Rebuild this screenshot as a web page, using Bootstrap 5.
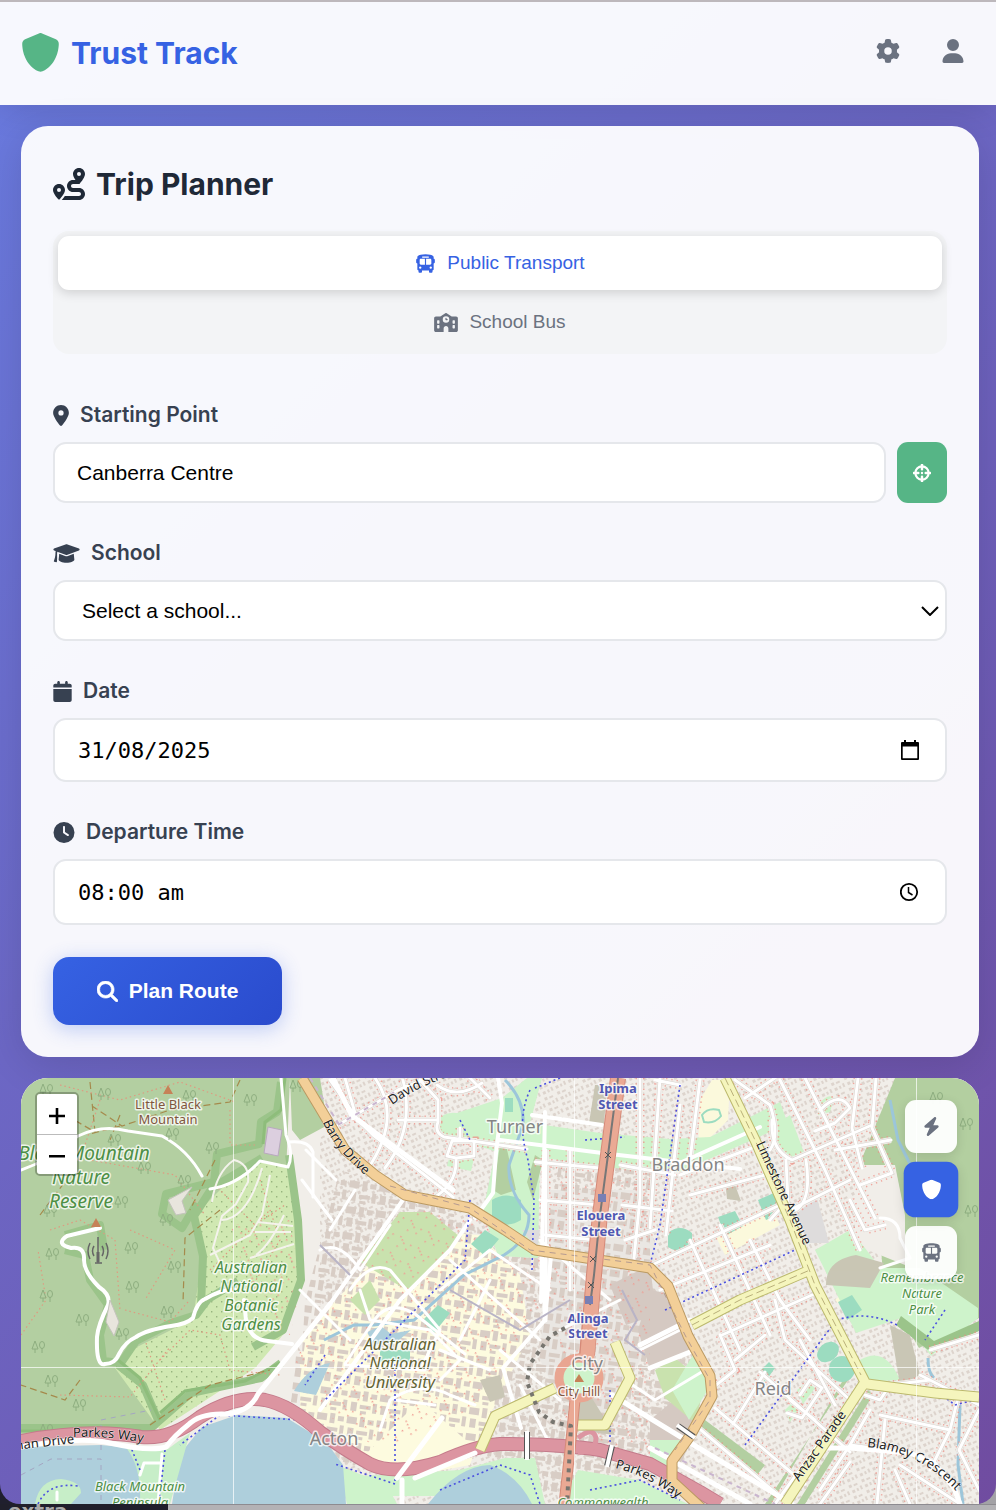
<!DOCTYPE html>
<html lang="en-AU">
<head>
<meta charset="utf-8">
<meta name="viewport" content="width=device-width, initial-scale=1">
<title>Trust Track</title>
<link href="https://cdn.jsdelivr.net/npm/bootstrap@5.3.0/dist/css/bootstrap.min.css" rel="stylesheet">
<style>
:root{--blue:#3662e3;--green:#56b586;--ink:#1f2937;--label:#374151;--muted:#6b7280;--line:#e5e7eb}
body{font-family:Inter,"Noto Sans",sans-serif;background:linear-gradient(90deg,#201f2e 0 50%,#a3a2a6 50%);color:var(--ink)}
.app-shell{background:linear-gradient(135deg,#697be0,#704ca0);border-radius:0 0 20px 20px}
.app-header{background:rgba(255,255,255,.95);border-top:2px solid #bdb8bc;padding:18px 21px 20px;height:105px;box-shadow:0 4px 32px rgba(0,0,0,.12)}
.brand-link{font-size:30px;line-height:40px;font-weight:700;color:var(--blue);gap:11px}
.brand-link svg{width:39px;height:39px;color:var(--green)}
.tool-btn{width:45px;height:45px;border:0;color:var(--muted);background:none}
.tool-btn svg{width:24px;height:24px}
svg{fill:currentColor;display:block;flex:none}
.app-main{padding:21px 17px 0 21px}
.planner{background:rgba(255,255,255,.95);border-radius:27px;padding:32px;box-shadow:0 8px 40px rgba(0,0,0,.12)}
.planner h1{font-size:30px;line-height:52px;font-weight:700;gap:11px;margin-bottom:21px}
.planner h1 svg{width:32px;height:32px}
.mode-switch{background:#f3f4f6;border-radius:16px;padding:5px;gap:5px;margin-bottom:47px}
.mode-btn{height:54px;border:0;border-radius:11px;background:none;color:var(--muted);font:19px "Liberation Sans",Arial,sans-serif;gap:11px;padding:0}
.mode-btn svg{height:19px}
.mode-btn.on{background:#fff;color:var(--blue);box-shadow:0 3px 11px rgba(0,0,0,.15)}
.field{margin-bottom:36px}
.field-last{margin-bottom:32px}
.field label{display:flex;align-items:center;gap:11px;font-size:21px;line-height:28px;font-weight:600;color:var(--label);margin-bottom:13px}
.field label svg{height:21px}
.field .form-control,.field .form-select{height:61px;border:2px solid var(--line);border-radius:13px;padding:0 22px;font:21px "Liberation Sans",Arial,sans-serif;color:#000;background-color:#fff}
.field .form-select{padding-left:27px;background-image:url("data:image/svg+xml,%3Csvg xmlns='http://www.w3.org/2000/svg' viewBox='0 0 18 10'%3E%3Cpath d='M1 1l8 8 8-8' fill='none' stroke='%23000' stroke-width='2'/%3E%3C/svg%3E");background-size:18px 10px;background-position:right 6px center}
.field .mono-input{font-family:"DejaVu Sans Mono",monospace;font-size:22px;height:64px;padding:0 23px}
.field .time-input{height:66px}
.pick-btn{position:absolute;right:22px;top:0;bottom:0;border:0;background:none;padding:0 5px;color:#000}
.pick-btn svg{width:20px;height:20px}
.locate-btn{width:50px;height:61px;border:0;border-radius:11px;background:var(--green);color:#fff}
.plan-btn{height:68px;width:229px;border:0;border-radius:16px;background:linear-gradient(135deg,#3662e3,#2a4bcd);color:#fff;font:bold 21px "Liberation Sans",Arial,sans-serif;gap:11px;box-shadow:0 4px 20px rgba(54,98,227,.3)}
.plan-btn svg{width:21px;height:21px;stroke:#fff;stroke-width:16px}
.map-panel{margin-top:21px;height:426px;border-radius:27px 27px 0 0;overflow:hidden;background:#f1eee9}
.map-art{width:100%;height:100%}
.zoom-box{left:14px;top:14px;border:2px solid rgba(0,0,0,.25);border-radius:5px;background-clip:padding-box}
.zoom-box button{width:40px;height:40px;border:0;background:#fff;padding:3px 0 0}
.zoom-box button+button{border-top:1px solid #bbb}
.layer-box{right:22px;top:22px;gap:10px}
.layer-box button{width:52px;height:53px;border:0;border-radius:11px;background:rgba(255,255,255,.95);color:var(--muted);box-shadow:0 3px 11px rgba(0,0,0,.12)}
.layer-box button.on{background:var(--blue);color:#fff;transform:scale(1.05)}
.layer-box svg{height:19px}
.under-strip{height:6px;overflow:hidden;background:linear-gradient(#8d8b90 0 1px,#b3b2b5 1px)}
.under-dark{width:168px;height:6px;background:#201f2b;color:#aaa;font:bold 20px/14px "DejaVu Sans",sans-serif;padding-left:8px}
/* map */
.w{fill:none;stroke:#fff;stroke-linecap:round;stroke-linejoin:round;stroke-width:3}
.casing{fill:none;stroke:#d9d3cf;stroke-width:4}
.paths{fill:none;stroke:#ee8f85;stroke-width:9;stroke-dasharray:1.3 4;opacity:.75}
.mask{fill:none;stroke:#f1eee9;stroke-width:6}
.avenue{stroke-width:5}
.foot{fill:none;stroke:#df9a80;stroke-width:1.2;stroke-dasharray:1.5 3}
.track{fill:none;stroke:#a58a4c;stroke-width:1.2;stroke-dasharray:7 4}
.bike{fill:none;stroke:#4a50e0;stroke-width:1.6;stroke-dasharray:2 3}
.ln{fill:none;stroke-linejoin:round}
.tx{font-family:"Noto Sans","Open Sans",sans-serif;text-anchor:middle;paint-order:stroke;stroke:#fff;stroke-opacity:.75;stroke-width:3px;stroke-linejoin:round}
.park{fill:#4d8f45;font-style:italic}
.sub{fill:#858585;font-size:18px}
.stop{fill:#5058b2;font-weight:700;font-size:13px}
.uni{fill:#626333;font-style:italic;font-size:16px}
.rd{fill:#222;font-size:13px;stroke-width:1px}
</style>
</head>
<body>
<svg width="0" height="0" class="position-absolute" aria-hidden="true">
<symbol id="i-shield" viewBox="0 0 512 512"><path d="M269.4 2.9C265.2 1 260.7 0 256 0s-9.2 1-13.4 2.9L54.3 82.8c-22 9.3-38.4 31-38.3 57.2c.5 99.2 41.3 280.7 213.6 363.2c16.7 8 36.1 8 52.8 0C454.7 420.7 495.5 239.2 496 140c.1-26.2-16.3-47.9-38.3-57.2L269.4 2.9z"/></symbol>
<symbol id="i-bus" viewBox="0 0 576 512"><path d="M288 0C422.4 0 512 35.2 512 80V96l0 32c17.7 0 32 14.3 32 32v64c0 17.7-14.3 32-32 32l0 160c0 17.7-14.3 32-32 32v32c0 17.7-14.3 32-32 32H416c-17.7 0-32-14.3-32-32V448H192v32c0 17.7-14.3 32-32 32H128c-17.7 0-32-14.3-32-32l0-32c-17.7 0-32-14.3-32-32l0-160c-17.7 0-32-14.3-32-32V160c0-17.7 14.3-32 32-32h0V96h0V80C64 35.2 153.6 0 288 0zM128 160v96c0 17.7 14.3 32 32 32H272V128H160c-17.7 0-32 14.3-32 32zM304 288H416c17.7 0 32-14.3 32-32V160c0-17.7-14.3-32-32-32H304V288zM144 400a32 32 0 1 0 0-64 32 32 0 1 0 0 64zm288 0a32 32 0 1 0 0-64 32 32 0 1 0 0 64zM384 80c0-8.8-7.2-16-16-16H208c-8.8 0-16 7.2-16 16s7.2 16 16 16H368c8.8 0 16-7.2 16-16z"/></symbol>
</svg>

<div class="app-shell">
<header class="app-header d-flex align-items-center justify-content-between">
  <a href="#" class="brand-link d-flex align-items-center text-decoration-none"><svg><use href="#i-shield"/></svg><span>Trust Track</span></a>
  <nav class="d-flex pb-1" style="gap:20px" aria-label="Account">
    <button class="tool-btn d-flex align-items-center justify-content-center p-0" aria-label="Settings"><svg viewBox="0 0 512 512"><path d="M495.9 166.6c3.2 8.7 .5 18.4-6.4 24.6l-43.3 39.4c1.1 8.3 1.7 16.8 1.7 25.4s-.6 17.1-1.7 25.4l43.3 39.4c6.9 6.2 9.6 15.9 6.4 24.6c-4.4 11.9-9.7 23.3-15.8 34.3l-4.7 8.1c-6.6 11-14 21.4-22.1 31.2c-5.9 7.2-15.7 9.6-24.5 6.8l-55.7-17.7c-13.4 10.3-28.2 18.9-44 25.4l-12.5 57.1c-2 9.1-9 16.3-18.2 17.8c-13.8 2.3-28 3.5-42.5 3.5s-28.7-1.2-42.5-3.5c-9.2-1.5-16.2-8.7-18.2-17.8l-12.5-57.1c-15.8-6.5-30.6-15.1-44-25.4L83.1 425.9c-8.8 2.8-18.6 .3-24.5-6.8c-8.1-9.8-15.5-20.2-22.1-31.2l-4.7-8.1c-6.1-11-11.4-22.4-15.8-34.3c-3.2-8.7-.5-18.4 6.4-24.6l43.3-39.4C64.6 273.1 64 264.6 64 256s.6-17.1 1.7-25.4L22.4 191.2c-6.9-6.2-9.6-15.9-6.4-24.6c4.4-11.9 9.7-23.3 15.8-34.3l4.7-8.1c6.6-11 14-21.4 22.1-31.2c5.9-7.2 15.7-9.6 24.5-6.8l55.7 17.7c13.4-10.3 28.2-18.9 44-25.4l12.5-57.1c2-9.1 9-16.3 18.2-17.8C227.3 1.2 241.5 0 256 0s28.7 1.2 42.5 3.5c9.2 1.5 16.2 8.7 18.2 17.8l12.5 57.1c15.8 6.5 30.6 15.1 44 25.4l55.7-17.7c8.8-2.8 18.6-.3 24.5 6.8c8.1 9.8 15.5 20.2 22.1 31.2l4.7 8.1c6.1 11 11.4 22.4 15.8 34.3zM256 336a80 80 0 1 0 0-160 80 80 0 1 0 0 160z"/></svg></button>
    <button class="tool-btn d-flex align-items-center justify-content-center p-0" aria-label="Profile"><svg viewBox="0 0 448 512"><path d="M224 256A128 128 0 1 0 224 0a128 128 0 1 0 0 256zm-45.7 48C79.8 304 0 383.8 0 482.3C0 498.7 13.3 512 29.7 512H418.3c16.4 0 29.7-13.3 29.7-29.7C448 383.8 368.2 304 269.7 304H178.3z"/></svg></button>
  </nav>
</header>

<main class="app-main">
<form class="planner" onsubmit="return false">
  <h1 class="d-flex align-items-center"><svg viewBox="0 0 512 512"><path d="M512 96c0 50.2-59.1 125.1-84.6 155c-3.8 4.4-9.4 6.1-14.5 5H320c-17.7 0-32 14.3-32 32s14.3 32 32 32h96c53 0 96 43 96 96s-43 96-96 96H139.6c8.7-9.9 19.3-22.6 30-36.8c6.3-8.4 12.8-17.6 19-27.2H416c17.7 0 32-14.3 32-32s-14.3-32-32-32H320c-53 0-96-43-96-96s43-96 96-96h39.8c-21-31.5-39.8-67.7-39.8-96c0-53 43-96 96-96s96 43 96 96zM117.1 489.1c-3.8 4.3-7.2 8.1-10.1 11.3l-1.8 2-.2-.2c-6 4.6-14.6 4-20-1.8C59.8 473 0 402.5 0 352c0-53 43-96 96-96s96 43 96 96c0 30-21.1 67-43.5 97.9c-10.7 14.7-21.7 28-30.8 38.5l-.6 .7zM128 352a32 32 0 1 0 -64 0 32 32 0 1 0 64 0zM416 128a32 32 0 1 0 0-64 32 32 0 1 0 0 64z"/></svg>Trip Planner</h1>
  <div class="mode-switch d-flex flex-column">
    <button type="button" class="mode-btn on d-flex align-items-center justify-content-center"><svg width="21"><use href="#i-bus"/></svg>Public Transport</button>
    <button type="button" class="mode-btn d-flex align-items-center justify-content-center"><svg viewBox="0 0 640 512" width="24"><path d="M337.8 5.4C327-1.8 313-1.8 302.2 5.4L166.3 96H48C21.5 96 0 117.5 0 144V464c0 26.5 21.5 48 48 48H256V416c0-35.3 28.7-64 64-64s64 28.7 64 64v96H592c26.5 0 48-21.5 48-48V144c0-26.5-21.5-48-48-48H473.7L337.8 5.4zM96 192h32c8.8 0 16 7.2 16 16v64c0 8.8-7.2 16-16 16H96c-8.8 0-16-7.2-16-16V208c0-8.8 7.2-16 16-16zm400 16c0-8.8 7.2-16 16-16h32c8.8 0 16 7.2 16 16v64c0 8.8-7.2 16-16 16H512c-8.8 0-16-7.2-16-16V208zM96 320h32c8.8 0 16 7.2 16 16v64c0 8.8-7.2 16-16 16H96c-8.8 0-16-7.2-16-16V336c0-8.8 7.2-16 16-16zm400 16c0-8.8 7.2-16 16-16h32c8.8 0 16 7.2 16 16v64c0 8.8-7.2 16-16 16H512c-8.8 0-16-7.2-16-16V336zM232 176a88 88 0 1 1 176 0 88 88 0 1 1 -176 0zm88-48c-8.8 0-16 7.2-16 16v32c0 8.8 7.2 16 16 16h32c8.8 0 16-7.2 16-16s-7.2-16-16-16H336V144c0-8.8-7.2-16-16-16z"/></svg>School Bus</button>
  </div>
  <div class="field">
    <label for="start"><svg viewBox="0 0 384 512" width="16"><path d="M215.7 499.2C267 435 384 279.4 384 192C384 86 298 0 192 0S0 86 0 192c0 87.4 117 243 168.3 307.2c12.3 15.3 35.1 15.3 47.4 0zM192 128a64 64 0 1 1 0 128 64 64 0 1 1 0-128z"/></svg>Starting Point</label>
    <div class="d-flex" style="gap:11px">
      <input id="start" class="form-control flex-fill" type="text" value="Canberra Centre">
      <button type="button" class="locate-btn d-flex align-items-center justify-content-center flex-shrink-0 p-0" aria-label="Use my location"><svg width="18" height="18" viewBox="0 0 18 18"><circle cx="9" cy="9" r="6.6" fill="none" stroke="currentColor" stroke-width="2.2"/><path d="M9 .8v4.500M9 12.700v4.500M.8 9h4.500M12.700 9h4.500" stroke="currentColor" stroke-width="2.500" stroke-linecap="round"/><circle cx="9" cy="9" r="1.200"/></svg></button>
    </div>
  </div>
  <div class="field">
    <label for="school"><svg viewBox="0 0 640 512" width="27"><path d="M320 32c-8 0-16 1.400-24 4L16 137c-10 4-16 13-16 23s6 19 16 23l40 14c-4 20-6 40-6 64 0 60-18 120-38 176-3 8 0 16 8 18l50 12c9 2 16-3 17-11 8-60 5-120 3-180 0-22 2-42 6-62l200 72c16 6 32 6 48 0l280-103c10-4 16-13 16-23s-6-19-16-23L344 36c-8-3-16-4-24-4zM143 263l-15 145c0 35 86 72 192 72s192-37 192-72l-15-145-142 51c-23 8-47 8-70 0z"/></svg>School</label>
    <select id="school" class="form-select"><option>Select a school...</option></select>
  </div>
  <div class="field">
    <label for="day"><svg viewBox="0 0 448 512" width="19"><path d="M96 32V64H48C21.5 64 0 85.5 0 112v48H448V112c0-26.5-21.5-48-48-48H352V32c0-17.7-14.3-32-32-32s-32 14.3-32 32V64H160V32c0-17.7-14.3-32-32-32S96 14.3 96 32zM448 192H0V464c0 26.5 21.5 48 48 48H400c26.5 0 48-21.5 48-48V192z"/></svg>Date</label>
    <div class="position-relative">
      <input id="day" class="form-control mono-input" type="text" inputmode="numeric" value="31/08/2025">
      <button type="button" class="pick-btn" aria-label="Open calendar"><svg viewBox="0 0 20 20"><path d="M2 2h2V0h2v2h8V0h2v2h2a1 1 0 0 1 1 1v16a1 1 0 0 1-1 1H2a1 1 0 0 1-1-1V3a1 1 0 0 1 1-1zm.700 4.500v11.800h14.600V6.500z" fill-rule="evenodd"/></svg></button>
    </div>
  </div>
  <div class="field field-last">
    <label for="depart"><svg viewBox="0 0 512 512" width="22"><path d="M256 0a256 256 0 1 1 0 512A256 256 0 1 1 256 0zM232 120V256c0 8 4 15.5 10.7 20l96 64c11 7.4 25.9 4.4 33.3-6.7s4.4-25.9-6.7-33.3L280 243.2V120c0-13.3-10.7-24-24-24s-24 10.7-24 24z"/></svg>Departure Time</label>
    <div class="position-relative">
      <input id="depart" class="form-control mono-input time-input" type="text" value="08:00 am">
      <button type="button" class="pick-btn" aria-label="Open time picker"><svg viewBox="0 0 20 20"><g fill="none" stroke="currentColor"><circle cx="9" cy="10" r="8.200" stroke-width="1.800"/><path d="M8.500 5v5.500l4 2.500" stroke-width="1.500"/></g></svg></button>
    </div>
  </div>
  <button class="plan-btn d-flex align-items-center justify-content-center"><svg viewBox="0 0 512 512"><path d="M416 208c0 45.9-14.9 88.3-40 122.7L502.6 457.4c12.5 12.5 12.5 32.8 0 45.3s-32.8 12.5-45.3 0L330.7 376c-34.4 25.2-76.8 40-122.7 40C93.1 416 0 322.9 0 208S93.1 0 208 0S416 93.1 416 208zM208 352a144 144 0 1 0 0-288 144 144 0 1 0 0 288z"/></svg>Plan Route</button>
</form>

<section class="map-panel position-relative" aria-label="Map">
<svg class="map-art" viewBox="21 1078 958 426" preserveAspectRatio="xMidYMid slice">
<defs>
<pattern id="houses" width="14" height="12" patternUnits="userSpaceOnUse" patternTransform="rotate(-25)"><path fill="#ddd4cd" d="M1 1h3v3H1zM6 2h4v2H6zM11 6h2v4h-2zM2 7h3v3H2zM7 7h2v3H7z"/></pattern>
<pattern id="blocks" width="30" height="26" patternUnits="userSpaceOnUse" patternTransform="rotate(8)"><path fill="#d8cdc5" d="M1 2h10v7H1zM14 1h5v10h-5zM22 3h6v5h-6zM3 13h6v9H3zM12 15h11v4H12zM25 12h4v10h-4zM13 21h6v3h-6z"/></pattern>
<pattern id="reds" width="21" height="19" patternUnits="userSpaceOnUse" patternTransform="rotate(33)"><path fill="#ef9d93" d="M1 1h1.500v1.500H1zM4 3h1.500v1.500H4zM7 5h1.500v1.500H7zM12 9h1.500v1.500H12zM3 11h1.500v1.500H3zM14 3h1.500v1.500H14z"/></pattern>
<pattern id="dots" width="10" height="10" patternUnits="userSpaceOnUse"><path fill="#98b57f" d="M1 1h1.400v1.400H1zM6 6h1.400v1.400H6z"/></pattern>
<g id="trees" fill="none" stroke="#8eae80" stroke-width="1"><path d="M0 8L3 0l3 8zM3 8v4M10 7v5"/><ellipse cx="10" cy="4" rx="2.500" ry="3.500"/></g>
<path id="p-barry" d="M323 1122Q334 1150 371 1180"/><path id="p-lime" d="M756 1144Q774 1184 806 1250"/><path id="p-anz" d="M799 1482L850 1410"/><path id="p-bla" d="M867 1447Q920 1452 955 1490"/><path id="p-park" d="M615 1468Q648 1476 680 1500"/><path id="p-pw" d="M73 1437Q110 1436 146 1443"/><path id="p-man" d="M16 1450L76 1443"/><path id="p-dav" d="M392 1105Q420 1085 462 1072"/>
<g id="minor">
<path d="M330 1080l28 40 15 15 80 62M345 1078l12 42M338 1125l60-35 30-12M375 1078q28 40-8 92M420 1080l18 20v22q-4 10 6 15l83 12M437 1085q20 15 45-2M398 1120h38M470 1078l20 20M403 1080q12 50-18 88M430 1200q28-15 26-42l18-2v-15h-22l-5 15 9 2M460 1140v-12"/>
<path d="M546 1150v140M570 1150v140M535 1162l65 6M540 1200l60 5M545 1235l50 5M640 1078v120l-6 60M660 1078l-10 150M680 1105l-14 130M655 1080l25 5M700 1080l-10 80M620 1165l55 10M622 1205l50 6"/>
<path d="M652 1265l128-60M660 1290l110-45M690 1240l50 110M720 1225l50 110M750 1240l30 60 30 40M680 1175l80-30M690 1195l75-20M735 1080l35 25q10 30 0 45M625 1240l30-10"/>
<path d="M780 1080l45 90 35 80M805 1078l40 80 30 60M858 1078l-6 50 10 40M772 1120q-2 30 20 40l80-35M745 1098l30-20M820 1110q20-20 30-2l-15 15-20 8M786 1160l2 40-18 20M806 1160q6 40-10 50M835 1150l56-10M790 1210l60-30M876 1078l-4 50 20 45-32 12M850 1200l15 30 20-5"/>
<path d="M722 1335l90-40M720 1335l15 35-25 20M735 1360l30-25M775 1300l10 40 65 60M760 1372l90 80M715 1408l90 76M695 1425l90 76M850 1400l-75 104M765 1372l-32 52M790 1400l25 20M800 1395l10-15 12 8-20 30-15-5M800 1340l35 65"/>
<path d="M870 1410l-20 35M865 1395l15 5 10-15 40-5M880 1415l70 15 10-40M885 1420l-8 84M820 1490l30-45 60 8M850 1462l-30 42M895 1470l15 34M900 1465l60 39M950 1430l-20 40M979 1410l-20 40 20 40M920 1375l59 30M930 1350l49-15"/>
</g>
</defs>
<rect x="21" y="1078" width="958" height="426" fill="#f1eee9"/>
<rect x="320" y="1078" width="659" height="426" fill="url(#houses)"/>
<!-- campus and commercial blocks -->
<path fill="#fdfbdf" d="M300 1340L400 1230l80 5 40 40 10 60-50 100-10 30-80 15-90-70z"/>
<path fill="#fbf9dc" d="M700 1100l12-20h18l-2 40-30 30zM715 1235l55-30 10 20-55 30zM835 1300l40-36 15 45-30 18z"/>
<path fill="#eae7e3" d="M550 1190h90l30 110-60 120-50-20-20-40z"/>
<path fill="url(#blocks)" d="M300 1320L340 1170l90 30 50 30 60 30 20-100h90v120l50 90-30 80-110 50-60-30-80-70-70 70-60-60z"/>
<path fill="#d5c9c2" d="M650 1290l25 5 20 50-25 20-20 5-12-40zM610 1285l40-20 6 50-30 10zM650 1420l30-25 25 15-25 55-30-15z"/>
<path fill="url(#reds)" d="M420 1210L350 1290l-60 60 30 60 60 40 90-40 70-100 100-60-40-60-100 30zM560 1180h90v280l-90-30z"/>
<path fill="#c9e2ae" d="M400 1212l-40 50 50 30 50-55-30-25zM350 1300l20-20 10 20-15 15zM655 1370l20-12 30 25-10 40-30-25z"/><path fill="url(#reds)" d="M400 1212l-40 50 50 30 50-55-30-25z"/>
<!-- forest -->
<path fill="#b3cfa1" d="M21 1078h299l8 50-36 12-4 60 14 62-30 76-130 102H21z"/>
<path fill="#f1eee9" d="M290 1078h10l28 52-14 14-12 210-10-20-6-160z"/>
<path fill="#b3cfa1" d="M290 1078h20l16 48-26 14-8-10zM895 1078h84v240l-60 30-35-60-6-80-20-40z"/>
<path fill="#f1eee9" d="M855 1165l40 0 10 50 0 50-50-20z"/>
<path fill="#d0e8b2" d="M260 1161l29 4 10 60 1 60-13 45-32 38-95 62-45-62 8-14 70-35 10-69-8-35 30-30z"/>
<path fill="url(#dots)" d="M260 1161l29 4 10 60 1 60-13 45-32 38-95 62-45-62 8-14 70-35 10-69-8-35 30-30z"/>
<path fill="url(#reds)" d="M230 1225l60-5 10 60-50 10zM262 1280l38 10-10 45-20-10z"/>
<g fill="none" stroke="#9bc48a" stroke-width="8" stroke-linejoin="round"><path d="M289 1155l9 65 3 60-18 50-30 17M262 1158l-50 30-18 28 9 40-2 50M281 1082l-4 30-16 10-2 22-42 10-3 28-48 12-4 20 20 14 15-25M65 1235l35-10 4 25M65 1250l20 5 5 25 18 25-8 30 3 26 18 2 15-22 35-18 25-8 12-16 30-18M118 1365l25 20 15 35M21 1428h130l40-35 70-15 20-15"/></g>
<g fill="none" stroke="#8ebd7b" stroke-width="3"><path d="M285 1078l-4 32-16 12-2 22M118 1360l22 18 20 42M21 1431h120M160 1413l25-22 60-10 35-18"/></g>
<g class="track"><path d="M90 1082l5 50-38-22M240 1080l-10 22-60 8-48 16-30-20M120 1115l-10 25M120 1126l-30 8M40 1215l30-40M220 1210l-35 28-2 65M80 1380l-15 20-44-15M215 1160l-25 50M150 1425l60-40 60-15"/></g>
<g class="foot"><path d="M50 1120l40 40 85 15 30 40M60 1085l60 15 60-18 55 20M230 1110v35h25M50 1230l30-10 35 20 5 70M21 1335l25-35-8-50M130 1230l45 20-30 50M125 1310l45 12 18-20M100 1100l-20 60-50 5M160 1360l30-30 30 5 10 35 50 5M165 1400l-20-60M60 1395l70 2 40-50M215 1185l40 40 30-20M210 1270l60-60M260 1180l20 60-30 50"/></g>
<g fill="none" stroke="#f4f3ec" stroke-width="2" stroke-linejoin="round"><path d="M212 1202q4-30 22-42 16 4 14 22l-12 22-14 12-9 32 10 22M262 1168q-14 50-40 52M270 1175l-8 40-12 20-40 20M255 1232h36M258 1222l35 4M250 1258l44-14M284 1215q-14 30-28 40"/></g>
<path class="w" d="M21 1170q30-10 57-34 24-12 50-5l34 5q26 14 40 40M210 1189q28-4 50-28l28 6q6-12-2-32l-5-57M289 1142q20-2 24 10v45"/>
<path class="w" style="stroke-width:4" d="M100 1228l-33 8q-12 8 4 12 14-2 13 12 0 12 15 27 12 8 9 18-10 20-11 32-1 30 8 27 10 0 14-10 6-12 17-17 10-7 35-11 16-2 22-8 4-16 12-19 16-10 30-9M244 1300l2 20q4 20 22 21l24 3"/>
<path fill="#e8e5dd" stroke="#c4c4bc" d="M168 1200l24-13-10 14 4 12-10 2zM110 1300l9 22-5 14-8-14z"/>
<path fill="#dccfdf" stroke="#b9a9bf" d="M268 1127l14 3-4 26-14-3z"/>
<g><use href="#trees" x="40" y="1084"/><use href="#trees" x="98" y="1088"/><use href="#trees" x="183" y="1090"/><use href="#trees" x="244" y="1094"/><use href="#trees" x="290" y="1080"/><use href="#trees" x="108" y="1134"/><use href="#trees" x="166" y="1128"/><use href="#trees" x="206" y="1142"/><use href="#trees" x="138" y="1162"/><use href="#trees" x="178" y="1175"/><use href="#trees" x="44" y="1205"/><use href="#trees" x="115" y="1196"/><use href="#trees" x="160" y="1214"/><use href="#trees" x="46" y="1248"/><use href="#trees" x="125" y="1242"/><use href="#trees" x="168" y="1261"/><use href="#trees" x="126" y="1281"/><use href="#trees" x="40" y="1290"/><use href="#trees" x="76" y="1314"/><use href="#trees" x="161" y="1306"/><use href="#trees" x="32" y="1341"/><use href="#trees" x="45" y="1375"/><use href="#trees" x="73" y="1399"/><use href="#trees" x="40" y="1424"/><use href="#trees" x="116" y="1328"/><use href="#trees" x="960" y="1118"/><use href="#trees" x="965" y="1205"/><use href="#trees" x="930" y="1092"/></g>
<!-- parks -->
<g fill="#cef3cb"><path d="M437 1123q5-12 20-10l45-15 25-20h15l-12 45 70 10 70 6 40-2 70-35 8 22-108 48-50-2-100-14-30-3-60-20zM498 1140l42 10-2 108-40-2-15-45zM450 1155l24 3-3 13-24-5zM772 1128l18-13 16 43q-30 5-34-30zM820 1103q8-10 14-5l-4 14-12 3z"/><path d="M815 1250l35-20 15 18 15 20h40l58 40v10l-47 38-30-38-45 15zM860 1360q25-15 40 20l-38 2zM672 1390l25-42 12 40-20 32zM578 1470l60 10 50 24H560zM460 1470l45-12 30 0 10 46h-18q-30-70-90-8h-86l10-20zM337 1465l50 20 10 19h-50zM650 1440h30l-10 30-20-5zM797 1390l10-8 8 6-12 16zM785 1410l8-8 6 6-9 14z"/></g>
<path fill="#9bc48a" d="M896 1325l36 28 47-22v-10l-45 20-33-25z"/>
<path fill="#b3cfa1" d="M500 1145h6l10 45-15 5-8-5zM535 1155l8 5-10 40-6-18zM858 1365l-12 10-75 129h-6zM868 1390l5 5-68 109h-8zM705 1420l60 45-8 10-58-43z"/>
<path fill="#c9c6b5" d="M826 1285q0-25 30-30l28 8-14 25zM890 1325l20 10 10 40-20 10zM480 1380l20-5 5 22-15 5zM595 1085h12l-3 40-15-2zM575 1395h15l25 40-40-5zM725 1180l10 5 6 16-14-2z"/>
<g fill="#9cdcc0"><path d="M492 1200q14-9 29 0v20q-14 9-29 0zM485 1230l14 9-14 17-14-12zM668 1233q12-10 24 0v14q-12 8-24 0zM758 1200l18-8 8 20-18 8zM718 1217l17-6 8 15-18 10zM759 1372l10-10 6 6-10 14zM838 1302l14-7 10 15-15 10zM438 1305l12 8-16 20-12-12zM505 1098h8v14h-8zM380 1350h30v12h-30z"/><circle cx="842" cy="1369" r="13"/><ellipse cx="828" cy="1352" rx="12" ry="9" transform="rotate(-40 828 1352)"/></g>
<path fill="none" stroke="#9cdcc0" stroke-width="2" d="M702 1115q6-8 17-5l2 6q-6 8-17 6z"/>
<path fill="#dedcdc" d="M795 1214l22-16 12 45-20 0zM540 1230h-18l15 20z"/>
<!-- water -->
<path fill="#aecfdc" d="M21 1447l80-2 50 5-5 54H21zM172 1504l8-50 22-27 35-12 50 3 40 25 16 22 3 39zM428 1504q30-38 62-39 28 10 42 39z"/>
<path fill="#c7eec8" d="M123 1444l45 5 8-6 14-10-20 71h-30q2-40-17-60zM35 1504q4-24 26-25 20 2 20 14l-10 11z"/>
<path class="w" d="M158 1504l4-50M140 1475l4-12 16 0M57 1500v-8"/>
<path fill="none" stroke="#9dc6da" stroke-width="3" d="M505 1080q20 20 18 45l-14 40q-2 25 20 50 0 25-25 40l-40 20-50 45-40 5-20 0-30 15M890 1100l8 40 20 40M960 1405l-2 60 5 39M928 1358q0 15 6 20"/>
<path fill="#aecfdc" d="M294 1391q15-25 36-28l-14 32zM367 1332l14-6 10 8 20-4-12 10-25 5z"/>
<path fill="none" stroke="#a4a6c2" stroke-dasharray="5 5" d="M21 1475l30-16h50v45M101 1450v-30l50-10"/>
<!-- residential streets with dotted footpaths either side -->
<use href="#minor" class="paths"/><use href="#minor" class="mask"/><use href="#minor" class="casing"/><use href="#minor" class="w"/>
<g class="w">
<path d="M320 1250q20-10 40 20l30-45M330 1230l25-40M300 1290l50 50M345 1364l30-45q15-20 40-5l50 40M350 1290q20-30 40-20l50 60-20 40M360 1290l10 30 60 10 30 30-20 20M440 1350l50 20M380 1430l10-30q30-20 60-5l25 10M440 1290l50-40 60 40M450 1260l90 80M395 1400l40 5M520 1385l30 60M345 1365l80 5M490 1280l-30 60M500 1350l60 50M560 1330l60-30M625 1380l30 20 50-30M610 1300l-70-60M640 1350l40-20M302 1180l30 40M306 1150l30 30M880 1218q20 0 20 20l10 20-30 10"/>
<path style="stroke-width:4" d="M498 1078l4 25-6 50-3 40-18 25M500 1140l110 14 130 15M675 1165l85-38M532 1115l70 10M545 1112l-4 190M330 1304l75-107M470 1220l-20 30-50 50-80 110M551 1256l-6 64-42 48 18 60"/>
<path class="avenue" d="M353 1118l-20-40M358 1120l95 70M612 1395l90 55 90 54M650 1448l100 56M650 1368l45-18M640 1345l50-25M825 1448l25 0 60 5 24 10 20 25 6 16M545 1320v-60"/></g>
<path fill="none" stroke="#b9b4c6" stroke-width="2" d="M320 1245l30 30M450 1290l70 40 50-30M622 1290l15 30-12 20 20 15"/>
<path fill="none" stroke="#c9b5cf" stroke-width="2" stroke-dasharray="5 5" d="M338 1125l60-35M655 1448l120 56M310 1078l30 48"/>
<g class="bike"><path d="M530 1090q-14 30-2 70l6 40-2 70M680 1085l-20 140-10 40M460 1120l10 20M585 1140l40-3M470 1200l-5 60-50 50-90 90M395 1364v120l-60-20M300 1420l-80-5-40 30M165 1450l-6 54M140 1470l-10-25M440 1490l60-25 30 10 10 29M590 1490l50-10 40 20M610 1390v60M745 1445l80-110 12-15q30-10 60 5M665 1310l130-60M945 1310l-20 30M935 1390l20 15 24-6M560 1078l-25 10M325 1355l-20 30M38 1504q10-22 40-18"/></g>
<!-- motorway -->
<g class="ln"><path stroke="#c47b8b" stroke-width="14" d="M21 1441Q90 1428 141 1437Q170 1440 200 1417Q235 1395 265 1400Q290 1405 320 1432Q345 1450 370 1464Q395 1476 440 1462Q475 1446 500 1444Q560 1444 600 1450L650 1464L700 1492L720 1504"/><path stroke="#dc95a1" stroke-width="12" d="M21 1441Q90 1428 141 1437Q170 1440 200 1417Q235 1395 265 1400Q290 1405 320 1432Q345 1450 370 1464Q395 1476 440 1462Q475 1446 500 1444Q560 1444 600 1450L650 1464L700 1492L720 1504"/><path stroke="#dc95a1" stroke-width="5" d="M578 1438q15-12 18 0 0 14-18 14"/></g>
<path class="w" style="stroke-width:5" d="M21 1447Q80 1436 110 1443Q150 1452 166 1447Q175 1435 188 1425Q200 1413 225 1414Q250 1412 258 1394L330 1304M397 1478l45-60M415 1478l60-25M402 1480v24"/>
<!-- arterials -->
<g class="ln" stroke="#bb9a63" stroke-width="11"><path d="M302 1078l18 30 25 42 30 25 30 20 65 13 35 22 30 20 115 18 18 18 20 50 22 40 2 20-22 40-18 25 0 20 38 35"/></g>
<g class="ln" stroke="#f3cf98" stroke-width="9"><path d="M302 1078l18 30 25 42 30 25 30 20 65 13 35 22 30 20 115 18 18 18 20 50 22 40 2 20-22 40-18 25 0 20 38 35"/></g>
<path class="ln" stroke="#b49a90" stroke-dasharray="6 5" d="M390 1186l80 22 60 42 120 15 35 70 25 45 0 20-35 50"/>
<g class="ln"><path stroke="#bcb96d" stroke-width="11" d="M725 1078l30 62 35 80 25 65 50 97-80 122M860 1383l75 10 44 4M692 1325l48-25 70-30M615 1342l15 36-25 47h-28M555 1388l-60 28-15 34"/><path stroke="#f5f5bd" stroke-width="9" d="M725 1078l30 62 35 80 25 65 50 97-80 122M860 1383l75 10 44 4M692 1325l48-25 70-30M615 1342l15 36-25 47h-28M555 1388l-60 28-15 34"/><path stroke="#b9b07a" stroke-dasharray="8 4" d="M725 1078l30 62 35 80 25 65 46 90M692 1325l48-25 70-30"/></g>
<g class="ln"><path stroke="#d58a79" stroke-width="16" d="M618 1078l-10 77-8 60-6 60-7 80"/><path stroke="#d58a79" stroke-width="11" d="M575 1400l-5 50-6 54"/><circle cx="579" cy="1378" r="20" stroke="#e9a591" stroke-width="9" fill="#cef3cb"/><path stroke="#eaa994" stroke-width="14" d="M618 1078l-10 77-8 60-6 60-7 85"/><path stroke="#eaa994" stroke-width="9" d="M575 1400l-5 50-6 54"/><path stroke="#777" stroke-width="2" d="M618 1078l-10 77-8 60-6 60-4 30"/><path stroke="#77756f" stroke-width="4" stroke-dasharray="4 5" d="M565 1328l-15 8-20 28-3 18 12 30 14 10 18 4-4 78"/></g>
<path stroke="#555" fill="none" d="M605 1152l6 6m0-6l-6 6M590 1256l6 6m0-6l-6 6M588 1282l6 6m0-6l-6 6"/>
<path fill="#787fb4" d="M598 1194h8v8h-8zM585 1296h8v8h-8z"/>
<path class="ln" stroke="#555" stroke-width="6" d="M527 1432v27M607 1466l5-20M678 1426l16 11"/><path class="ln" stroke="#fff" stroke-width="4" d="M527 1431v29M607 1467l5-22M677 1425l18 13"/>
<path fill="#c68258" d="M168 1085l5 9h-10zM96 1218l5 9h-10zM579 1374l5 8h-10z"/>
<g fill="none" stroke="#666" stroke-width="1.500"><path d="M98 1237v26M95 1263h7M94 1246q-3 5 0 10M90 1243q-4 8 0 16M102 1246q3 5 0 10M106 1243q4 8 0 16"/><path stroke-width="3" d="M98 1252v10"/></g>
<!-- names -->
<g class="tx">
<g fill="#80563e" font-size="13"><text x="168" y="1109">Little Black</text><text x="168" y="1124">Mountain</text><text x="579" y="1396" font-size="12">City Hill</text></g>
<g class="park" font-size="19"><text x="84" y="1160">Black Mountain</text><text x="81" y="1184">Nature</text><text x="81" y="1208">Reserve</text></g>
<g class="park" font-size="16"><text x="251" y="1273">Australian</text><text x="251" y="1292">National</text><text x="251" y="1311">Botanic</text><text x="251" y="1330">Gardens</text></g>
<g class="park" font-size="13"><text x="140" y="1491">Black Mountain</text><text x="140" y="1507">Peninsula</text><text x="922" y="1282">Remembrance</text><text x="922" y="1298">Nature</text><text x="922" y="1314">Park</text><text x="603" y="1507">Commonwealth</text></g>
<g class="uni"><text x="400" y="1350">Australian</text><text x="400" y="1369">National</text><text x="400" y="1388">University</text></g>
<g class="sub"><text x="515" y="1133">Turner</text><text x="688" y="1171">Braddon</text><text x="773" y="1395">Reid</text><text x="334" y="1445">Acton</text><text x="587" y="1370">City</text></g>
<g class="stop"><text x="618" y="1093">Ipima</text><text x="618" y="1109">Street</text><text x="601" y="1220">Elouera</text><text x="601" y="1236">Street</text><text x="588" y="1323">Alinga</text><text x="588" y="1338">Street</text></g>
</g>
<g class="tx rd" style="text-anchor:start"><text><textPath href="#p-barry">Barry Drive</textPath></text><text><textPath href="#p-lime">Limestone Avenue</textPath></text><text><textPath href="#p-anz">Anzac Parade</textPath></text><text><textPath href="#p-bla">Blamey Crescent</textPath></text><text><textPath href="#p-park">Parkes Way</textPath></text><text><textPath href="#p-pw">Parkes Way</textPath></text><text><textPath href="#p-man">nan Drive</textPath></text><text><textPath href="#p-dav">David Street</textPath></text></g>
<path stroke="#fff" stroke-opacity=".7" d="M233.500 1078v426M574.500 1078v426M916.500 1078v426M21 1367.500h958"/>
</svg>
<div class="zoom-box position-absolute overflow-hidden d-flex flex-column">
<button type="button" class="d-flex align-items-center justify-content-center" aria-label="Zoom in"><svg width="18" height="18" viewBox="0 0 18 18"><path d="M7.700 1h2.600v6.700H17v2.600h-6.700V17H7.700v-6.700H1V7.700h6.700z"/></svg></button>
<button type="button" class="d-flex align-items-center justify-content-center" aria-label="Zoom out"><svg width="18" height="18" viewBox="0 0 18 18"><path d="M1 8h16v2.600H1z"/></svg></button>
</div>
<div class="layer-box position-absolute d-flex flex-column">
<button type="button" class="d-flex align-items-center justify-content-center p-0" aria-label="Fastest"><svg viewBox="0 0 448 512" width="17"><path d="M349.4 44.6c5.9-13.7 1.5-29.7-10.6-38.5s-28.6-8-39.9 1.8l-256 224c-10 8.8-13.6 22.9-8.9 35.3S50.7 288 64 288H175.5L98.6 467.4c-5.9 13.7-1.5 29.7 10.6 38.5s28.6 8 39.9-1.8l256-224c10-8.8 13.6-22.9 8.9-35.3s-16.6-20.7-30-20.7H272.5L349.4 44.6z"/></svg></button>
<button type="button" class="on d-flex align-items-center justify-content-center p-0" aria-label="Safest"><svg width="19"><use href="#i-shield"/></svg></button>
<button type="button" class="d-flex align-items-center justify-content-center p-0" aria-label="Transit"><svg width="21"><use href="#i-bus"/></svg></button>
</div>
</section>
</main>
</div>
<div class="under-strip"><div class="under-dark">extra</div></div>
<script src="https://cdn.jsdelivr.net/npm/bootstrap@5.3.0/dist/js/bootstrap.bundle.min.js"></script>
</body>
</html>
